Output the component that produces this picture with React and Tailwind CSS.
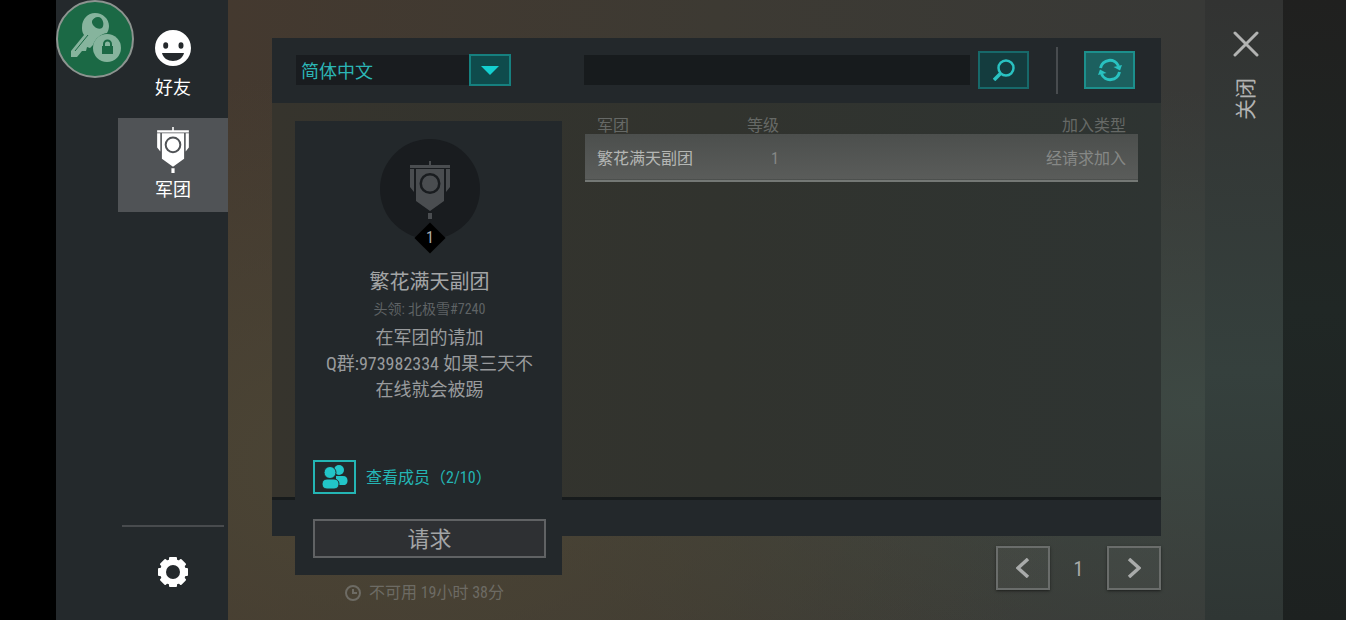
import React, { useState } from 'react';

const LEGIONS = [
    {
        id: 1,
        name: '繁花满天副团',
        level: 1,
        joinType: '经请求加入',
        leader: '北极雪#7240',
        motto: ['在军团的请加', 'Q群:973982334 如果三天不', '在线就会被踢'],
        members: 2,
        capacity: 10,
    },
];

function BannerIcon({ className }) {
    return (
        <svg viewBox="0 0 40 58" className={className} fill="currentColor" aria-hidden="true">
            <path d="M19 0h2v4h19v3H0V4h19z" />
            <path d="M0 8h4v23L0 26zM40 8h-4v23l4-5z" />
            <path
                fillRule="evenodd"
                d="M6 8h28v32L20 50 6 40zM20 12a10.500 10.500 0 1 0 0 21a10.500 10.500 0 1 0 0-21zM20 14.500a8 8 0 1 1 0 16a8 8 0 1 1 0-16z"
            />
            <path d="M18 52h4v7h-4z" />
        </svg>
    );
}

function SmileIcon({ className }) {
    return (
        <svg viewBox="0 0 36 36" className={className} aria-hidden="true">
            <path
                fill="currentColor"
                fillRule="evenodd"
                d="M18 0a18 18 0 1 0 0 36a18 18 0 1 0 0-36zM10.700 12.300a2.500 3.200 0 1 1 0 6.400a2.500 3.200 0 1 1 0-6.400zM26 12.300a2.500 3.200 0 1 1 0 6.400a2.500 3.200 0 1 1 0-6.400zM7 23h22c-1 5-6 8-11 8s-10-3-11-8z"
            />
        </svg>
    );
}

function GearIcon({ className }) {
    return (
        <svg viewBox="0 0 30 30" className={className} aria-hidden="true">
            <g fill="currentColor">
                <rect x="11" y="0" width="8" height="30" rx="1" />
                <rect x="0" y="11" width="30" height="8" rx="1" />
                <rect x="11" y="0" width="8" height="30" rx="1" transform="rotate(45 15 15)" />
                <rect x="11" y="0" width="8" height="30" rx="1" transform="rotate(-45 15 15)" />
                <circle cx="15" cy="15" r="13" />
            </g>
            <circle cx="15" cy="15" r="7" fill="#24292c" />
        </svg>
    );
}

function KeyLockIcon({ className }) {
    return (
        <svg viewBox="0 0 78 78" className={className} aria-hidden="true">
            <circle cx="39" cy="39" r="38" fill="#1b6945" stroke="#8d9490" strokeWidth="2" />
            <path
                fill="#86b49d"
                fillRule="evenodd"
                d="M39 13c8 0 14 6 14 13 0 3-1 5-2 7-7 1-12 6-14 12l-3 3-3-1-1 4-4 0-5 6-6 0 0-6 13-16c-2-3-2-5-2-8 0-8 6-14 13-14zM36 21c-1 4 6 10 10 7 3-3 1-11-4-11-3 0-5 2-6 4z"
            />
            <path d="M19 51L32 35" stroke="#1b6945" strokeWidth="1" />
            <circle cx="51" cy="48" r="14" fill="#86b49d" />
            <rect x="46" y="46" width="11" height="8" fill="#1b6945" />
            <path d="M48 46v-2a3 3 0 0 1 7 0v2" fill="none" stroke="#1b6945" strokeWidth="2" />
        </svg>
    );
}

function MembersIcon({ className }) {
    return (
        <svg viewBox="0 0 26 24" className={className} fill="currentColor" aria-hidden="true">
            <circle cx="17" cy="5" r="5" />
            <path d="M14 11h7c3 0 4.500 2 4.500 4.500s-1 4.500-4 4.500H14z" />
            <g stroke="#24292c" strokeWidth="1">
                <circle cx="8" cy="7.500" r="6" />
                <path d="M5 14h7c3 0 5 2 5 5s-2 5-5 5H5c-3 0-5-2-5-5s2-5 5-5z" />
            </g>
        </svg>
    );
}

function SidebarTab({ icon, label, active }) {
    return (
        <button
            className={`flex h-[94px] w-[110px] flex-col items-center pt-2 text-white ${active ? 'bg-[#505356]' : ''}`}
        >
            <span className="flex h-[48px] items-center">{icon}</span>
            <span className="mt-1 text-[18px] leading-6">{label}</span>
        </button>
    );
}

function Sidebar() {
    return (
        <nav className="relative flex w-[172px] shrink-0 flex-col items-end gap-2 bg-[#24292c] pt-4">
            <KeyLockIcon className="absolute top-0 left-0 size-[78px]" />
            <SidebarTab icon={<SmileIcon className="size-9" />} label="好友" />
            <SidebarTab icon={<BannerIcon className="h-[46px] w-8" />} label="军团" active />
            <div className="mt-auto flex w-[110px] flex-col items-center px-1 pb-[33px]">
                <hr className="w-full border-t-2 border-[#484b4e]" />
                <button aria-label="设置" className="mt-[30px] text-white">
                    <GearIcon className="size-[30px]" />
                </button>
            </div>
        </nav>
    );
}

function Toolbar() {
    const [query, setQuery] = useState('');

    return (
        <form
            onSubmit={(e) => e.preventDefault()}
            className="col-span-2 row-start-1 flex h-[65px] items-center bg-[#23282b] pr-[26px] pb-px pl-6"
        >
            {/* Language */}
            <div className="grid w-[215px] grid-cols-[1fr_42px] items-center">
                <select
                    aria-label="语言"
                    className="col-span-2 col-start-1 row-start-1 h-[30px] w-full appearance-none bg-[#191c1f] pt-0.5 pl-[5px] text-[18px] text-[#2cb5b5] outline-none"
                >
                    <option>简体中文</option>
                </select>
                <span className="pointer-events-none col-start-2 row-start-1 flex h-8 items-center justify-center border-2 border-[#16807f] bg-[#0f4b4c]">
                    <svg viewBox="0 0 18 9" className="h-[9px] w-[18px]">
                        <path d="M0 0h18L9 9z" fill="#14cfd0" />
                    </svg>
                </span>
            </div>

            {/* Search */}
            <input
                aria-label="搜索军团"
                value={query}
                onChange={(e) => setQuery(e.target.value)}
                className="ml-[73px] h-[30px] min-w-0 flex-1 bg-[#171b1d] px-2 text-[18px] text-[#2cb5b5] outline-none"
            />
            <button
                aria-label="搜索"
                className="ml-2 flex h-[38px] w-[51px] items-center justify-center border-2 border-[#17696a] bg-[#143c3e] text-[#29c2c1]"
            >
                <svg viewBox="0 0 22 22" className="size-[22px]" fill="none" stroke="currentColor" strokeWidth="2.500">
                    <circle cx="13" cy="9" r="7.500" />
                    <path d="M7.500 14.500L1 21" strokeWidth="3.500" />
                </svg>
            </button>

            <div className="ml-[27px] h-[47px] w-0.5 bg-[#484c4f]" />

            <button
                aria-label="刷新"
                className="ml-[26px] flex h-[38px] w-[51px] items-center justify-center border-2 border-[#1c8f8c] bg-[#1c605f] text-[#29c2c1]"
            >
                <svg viewBox="0 0 24 24" className="size-6" fill="none" stroke="currentColor" strokeWidth="3">
                    <path d="M2.500 10a9.500 9.500 0 0 1 18-2" />
                    <path d="M21.500 14a9.500 9.500 0 0 1-18 2" />
                    <path d="M24 7l-2 5.500L15.500 9z" fill="currentColor" stroke="none" />
                    <path d="M0 17l2-5.500L8.500 15z" fill="currentColor" stroke="none" />
                </svg>
            </button>
        </form>
    );
}

function LegionCard({ legion }) {
    return (
        <section className="flex h-[454px] flex-col items-center bg-[#23282b] pt-[18px] pr-4 pb-[17px] pl-[18px]">
            {/* Emblem */}
            <div className="relative flex size-[100px] shrink-0 justify-center rounded-full bg-[#191c1f] pt-[22px]">
                <BannerIcon className="h-[58px] w-10 text-[#4a4d50]" />
                <div className="absolute -bottom-[10px] left-1/2 flex size-[22px] -translate-x-1/2 rotate-45 items-center justify-center bg-black">
                    <span className="-rotate-45 text-[16px] leading-4 text-[#b0b0b0]">{legion.level}</span>
                </div>
            </div>

            <h2 className="mt-[29px] text-[20px] leading-7 text-[#a3a5a6]">{legion.name}</h2>
            <p className="mt-[3px] text-[14px] leading-5 text-[#5f6365]">头领: {legion.leader}</p>
            <p className="mt-[6px] text-center text-[18px] leading-[26px] text-[#999b9d]">
                {legion.motto.map((line) => (
                    <span key={line} className="block whitespace-nowrap">{line}</span>
                ))}
            </p>

            <button className="mt-auto flex items-center gap-[10px] self-start text-[#24b5b4]">
                <span className="flex h-[34px] w-[43px] items-center justify-center border-2 border-[#24b5b4]">
                    <MembersIcon className="h-6 w-[26px] text-[#22c5c8]" />
                </span>
                <span className="pt-0.5 text-[16px] leading-6">
                    查看成员（{legion.members}/{legion.capacity}）
                </span>
            </button>
            <button className="mt-[25px] h-[39px] w-full shrink-0 border-2 border-[#606264] bg-[#2e3033] pt-0.5 text-[22px] leading-none text-[#a3a5a6]">
                请求
            </button>
        </section>
    );
}

function LegionTable({ legions }) {
    return (
        <table className="w-full table-fixed border-collapse text-[16px] leading-4">
            <thead className="text-[#666966]">
                <tr className="h-[31px] align-bottom">
                    <th className="w-[162px] pl-3 text-left font-normal">军团</th>
                    <th className="w-8 text-right font-normal">等级</th>
                    <th className="pr-3 text-right font-normal">加入类型</th>
                </tr>
            </thead>
            <tbody>
                {legions.map((legion) => (
                    <tr
                        key={legion.id}
                        className="h-[47px] border-b-2 border-[#747875] bg-linear-to-b from-[#4c4f4d] to-[#5a5c5a]"
                    >
                        <td className="pt-1 pl-3 text-[#b4b6b4]">{legion.name}</td>
                        <td className="pt-1 text-right text-[#868886]">{legion.level}</td>
                        <td className="pt-1 pr-3 text-right text-[#868886]">{legion.joinType}</td>
                    </tr>
                ))}
            </tbody>
        </table>
    );
}

function Pager({ page }) {
    const arrow =
        'flex h-11 w-[54px] items-center justify-center border-2 border-[#6a6d6b] bg-white/4 text-[#a9abaa] shadow-sm shadow-black/40';

    return (
        <div className="flex items-center justify-end text-[20px] text-[#a9abaa]">
            <button aria-label="上一页" className={arrow}>
                <svg viewBox="0 0 14 20" className="h-5 w-[14px]" fill="none" stroke="currentColor" strokeWidth="3.500">
                    <path d="M12 1L2 10l10 9" />
                </svg>
            </button>
            <span className="w-[57px] pt-0.5 text-center">{page}</span>
            <button aria-label="下一页" className={arrow}>
                <svg viewBox="0 0 14 20" className="h-5 w-[14px]" fill="none" stroke="currentColor" strokeWidth="3.500">
                    <path d="M2 1l10 9-10 9" />
                </svg>
            </button>
        </div>
    );
}

function CloseRail() {
    return (
        <aside className="w-[78px] shrink-0 bg-[#303432] bg-[linear-gradient(to_bottom,#323332,#35403d_60%,#2f3634)]">
            <button className="flex w-full flex-col items-center pt-[31px] pl-1 text-[#b2b3b2]">
                <svg viewBox="0 0 26 26" className="size-[26px]" fill="none" stroke="currentColor" strokeWidth="3" strokeLinecap="round">
                    <path d="M2 2l22 22M24 2L2 24" />
                </svg>
                <span className="mt-[19px] flex size-[46px] items-center justify-center">
                    <span className="-rotate-90 text-[21px] leading-6 whitespace-nowrap">关闭</span>
                </span>
            </button>
        </aside>
    );
}

export default function App() {
    const selected = LEGIONS[0];

    return (
        <div className="flex min-h-screen bg-black font-['Roboto_Condensed','Noto_Sans_CJK_SC',sans-serif]">
            <div className="w-14 shrink-0" />
            <Sidebar />

            <main className="min-w-0 flex-1 bg-[#3d3b35] bg-[radial-gradient(ellipse_at_15%_75%,#4b4535_0%,transparent_60%),radial-gradient(ellipse_at_100%_65%,#3d4843_0%,transparent_55%),linear-gradient(to_right,#44392f,#3d3a33_50%,#383937)] px-11 pt-[38px]">
                <div className="grid grid-cols-[290px_1fr] grid-rows-[65px_397px_36px_auto]">
                    <Toolbar />
                    <div className="col-span-2 col-start-1 row-start-2 border-b-[3px] border-[#171b1c] bg-linear-to-r from-[#36342d] via-[#31332e] to-[#2e3432]" />
                    <div className="col-span-2 col-start-1 row-start-3 bg-[#23282b]" />

                    <div className="col-start-1 row-span-3 row-start-2 pt-[18px] pl-[23px]">
                        <LegionCard legion={selected} />
                        <p className="mt-[6px] flex items-center justify-center gap-2 pr-2 text-[16px] leading-6 text-[#6d6b64]">
                            <svg viewBox="0 0 16 16" className="size-4" fill="none" stroke="currentColor" strokeWidth="2">
                                <circle cx="8" cy="8" r="7" />
                                <path d="M8 4v4h4" />
                            </svg>
                            不可用 19小时 38分
                        </p>
                    </div>

                    <div className="col-start-2 row-start-2 px-[23px]">
                        <LegionTable legions={LEGIONS} />
                    </div>
                    <div className="col-start-2 row-start-4 pt-[10px]">
                        <Pager page={1} />
                    </div>
                </div>
            </main>

            <CloseRail />
            <div className="w-[63px] shrink-0 bg-linear-to-b from-[#20201f] via-[#202725] to-[#1d2120]" />
        </div>
    );
}
